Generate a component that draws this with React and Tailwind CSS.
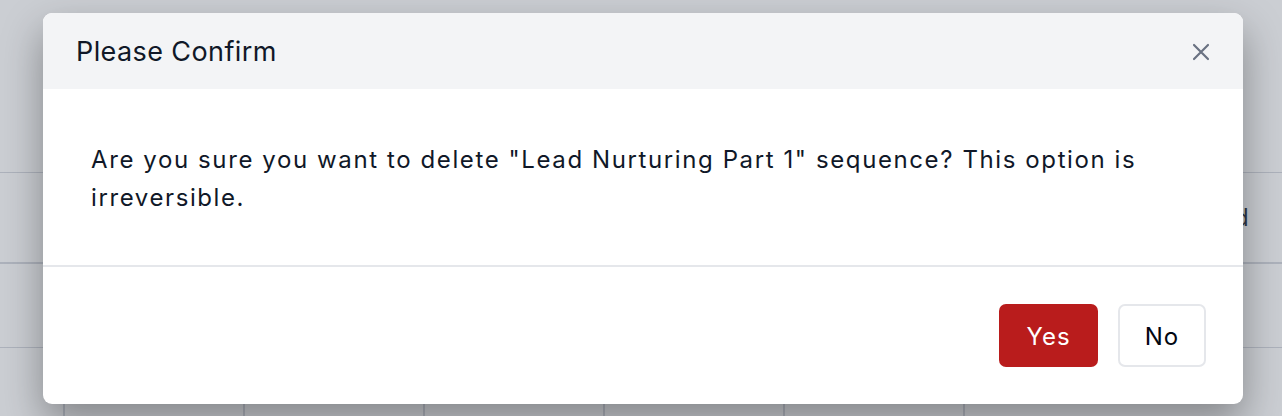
import { useState } from 'react';

const columns = [0, 1, 2, 3, 4, 5];

function CloseIcon() {
    return (
        <svg width="18" height="18" viewBox="0 0 18 18" fill="none" stroke="currentColor" strokeWidth="2.2" strokeLinecap="round">
            <path d="M2 2L16 16M16 2L2 16" />
        </svg>
    );
}

export default function App() {
    const [open, setOpen] = useState(true);

    return (
        <div className="relative h-screen w-full overflow-hidden bg-white" style={{ fontFamily: 'Inter, "Noto Sans", sans-serif' }}>
            {/* page underneath */}
            <div className="flex flex-col">
                <div className="h-[172px]" />
                <div className="h-[90px] border-t border-gray-300 flex items-center justify-end pr-[32px]">
                    <span className="text-[24px] tracking-[1.3px] text-gray-900">Created</span>
                </div>
                <div className="h-[85px] border-t-2 border-gray-300" />
                <div className="h-[80px] border-t border-gray-300 flex pl-[63px]">
                    {columns.map((c) => (
                        <div key={c} className="w-[180px] shrink-0 h-full border-l-2 border-gray-300" />
                    ))}
                </div>
            </div>

            {open && (
                <div className="absolute inset-0 bg-[#6b7280]/35 flex justify-start pl-[43px] pt-[13px]">
                    <div className="w-[1200px] self-start bg-white rounded-[9px] shadow-[0_18px_40px_rgba(0,0,0,0.35)] flex flex-col overflow-hidden">
                        <div className="h-[76px] bg-[#f3f4f6] flex items-center justify-between pl-[33px] pr-[33px]">
                            <h3 className="pt-[3px] text-[27px] tracking-[0.4px] text-gray-900 font-normal">Please Confirm</h3>
                            <button className="pt-[1px] text-gray-500" onClick={() => setOpen(false)}>
                                <CloseIcon />
                            </button>
                        </div>
                        <div className="px-[48px] pt-[52px] pb-[48px] border-b-2 border-gray-200">
                            <p className="text-[24px] leading-[38px] tracking-[1.6px] text-gray-900">
                                Are you sure you want to delete "Lead Nurturing Part 1" sequence? This option is irreversible.
                            </p>
                        </div>
                        <div className="flex justify-end gap-[20px] px-[37px] py-[37px]">
                            <button className="h-[63px] w-[99px] pt-[3px] rounded-[7px] bg-[#b91c1c] text-white text-[24px] tracking-[1px]">
                                Yes
                            </button>
                            <button className="h-[63px] w-[88px] pt-[3px] rounded-[7px] bg-white border-2 border-gray-200 text-gray-950 text-[24px] tracking-[1px]">
                                No
                            </button>
                        </div>
                    </div>
                </div>
            )}
        </div>
    );
}
